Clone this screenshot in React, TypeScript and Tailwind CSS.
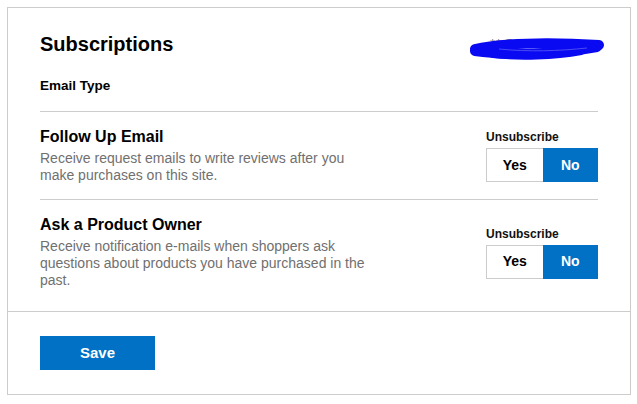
import React from "react";

const emailTypes = [
  {
    id: "followup",
    title: "Follow Up Email",
    desc: "Receive request emails to write reviews after you make purchases on this site.",
  },
  {
    id: "productowner",
    title: "Ask a Product Owner",
    desc: "Receive notification e-mails when shoppers ask questions about products you have purchased in the past.",
  },
];

const Redacted = () => (
  <div className="relative mt-[4px] mr-[8px] h-[16px] w-[110px]">
    <span className="absolute left-[10px] top-0 text-[13px] leading-4 tracking-[1px] text-[#777]">
      **@*****
    </span>
    {/* marker scribble over the address */}
    <svg
      className="absolute left-[-11px] top-[1px]"
      width="136"
      height="24"
      viewBox="0 0 136 24"
      fill="none"
    >
      <g stroke="#0a0af2" strokeLinecap="round" strokeWidth="10">
        <path d="M6 12 C 30 6, 80 5, 130 8" />
        <path d="M6 14 C 40 19, 90 17, 128 10" />
        <path d="M24 16 C 50 19, 85 18, 112 13" />
      </g>
      <path d="M30 12 C 60 15, 90 14, 118 11" stroke="#4a4af4" strokeWidth="1" />
    </svg>
  </div>
);

const UnsubscribeToggle = () => (
  <div className="flex flex-col">
    <p className="mb-[3px] text-[12px] leading-4 font-bold text-[#111]">
      Unsubscribe
    </p>
    <div className="flex h-[34px] w-[112px]">
      <button className="flex-1 border border-r-0 border-[#ccc] bg-white text-[14px] font-bold text-black">
        Yes
      </button>
      <button className="flex-1 bg-[#0071c5] text-[14px] font-bold text-white">
        No
      </button>
    </div>
  </div>
);

export default function App() {
  return (
    <div className="min-h-screen bg-white font-['Liberation_Sans',Arial,sans-serif]">
      <div className="ml-[7px] mt-[7px] w-[624px] border border-[#ccc] bg-white">
        <div className="px-[32px] pb-[7px]">
          <div className="border-b border-[#ccc] pt-[24px] pb-[15px]">
            <div className="flex items-start justify-between">
              <h1 className="text-[20px] leading-6 font-bold text-black">
                Subscriptions
              </h1>
              <Redacted />
            </div>
            <p className="mt-[20px] text-[13.5px] leading-5 font-bold text-black">
              Email Type
            </p>
          </div>
          {emailTypes.map((item, i) => (
            <div
              key={item.id}
              className={`flex items-center justify-between py-[15px] ${
                i < emailTypes.length - 1 ? "border-b border-[#ccc]" : ""
              }`}
            >
              <div className="w-[335px]">
                <h2 className="text-[16px] leading-5 font-bold text-black">
                  {item.title}
                </h2>
                <p className="mt-[3px] text-[14px] leading-[17px] text-[#707070]">
                  {item.desc}
                </p>
              </div>
              <UnsubscribeToggle />
            </div>
          ))}
        </div>
        <div className="border-t border-[#ccc] px-[32px] py-[24px]">
          <button className="h-[34px] w-[115px] bg-[#0071c5] text-[15px] font-bold text-white">
            Save
          </button>
        </div>
      </div>
    </div>
  );
}
